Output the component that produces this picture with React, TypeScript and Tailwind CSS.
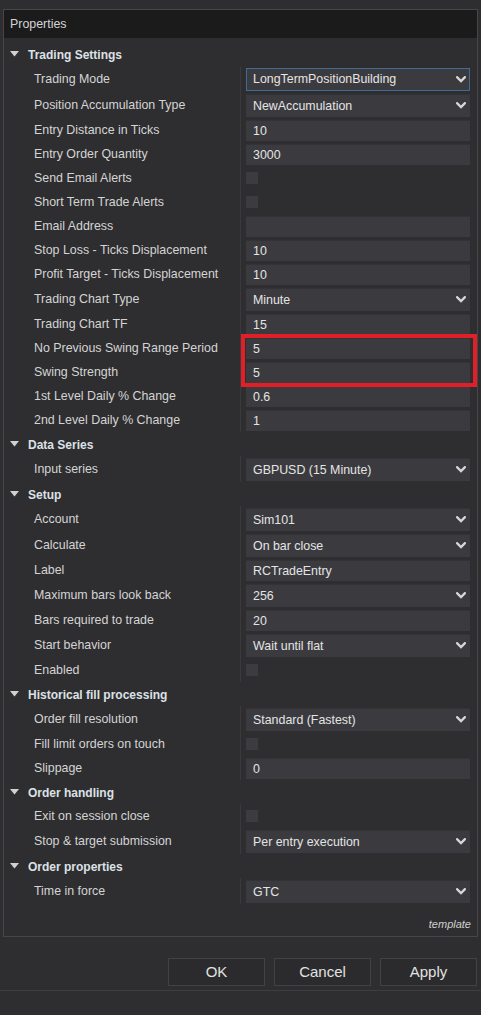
import React from "react";

type Row =
  | { kind: "section"; title: string }
  | { kind: "text"; label: string; value: string }
  | { kind: "combo"; label: string; value: string; focused?: boolean }
  | { kind: "check"; label: string };

const rows: Row[] = [
  { kind: "section", title: "Trading Settings" },
  { kind: "combo", label: "Trading Mode", value: "LongTermPositionBuilding", focused: true },
  { kind: "combo", label: "Position Accumulation Type", value: "NewAccumulation" },
  { kind: "text", label: "Entry Distance in Ticks", value: "10" },
  { kind: "text", label: "Entry Order Quantity", value: "3000" },
  { kind: "check", label: "Send Email Alerts" },
  { kind: "check", label: "Short Term Trade Alerts" },
  { kind: "text", label: "Email Address", value: "" },
  { kind: "text", label: "Stop Loss - Ticks Displacement", value: "10" },
  { kind: "text", label: "Profit Target - Ticks Displacement", value: "10" },
  { kind: "combo", label: "Trading Chart Type", value: "Minute" },
  { kind: "text", label: "Trading Chart TF", value: "15" },
  { kind: "text", label: "No Previous Swing Range Period", value: "5" },
  { kind: "text", label: "Swing Strength", value: "5" },
  { kind: "text", label: "1st Level Daily % Change", value: "0.6" },
  { kind: "text", label: "2nd Level Daily % Change", value: "1" },
  { kind: "section", title: "Data Series" },
  { kind: "combo", label: "Input series", value: "GBPUSD (15 Minute)" },
  { kind: "section", title: "Setup" },
  { kind: "combo", label: "Account", value: "Sim101" },
  { kind: "combo", label: "Calculate", value: "On bar close" },
  { kind: "text", label: "Label", value: "RCTradeEntry" },
  { kind: "combo", label: "Maximum bars look back", value: "256" },
  { kind: "text", label: "Bars required to trade", value: "20" },
  { kind: "combo", label: "Start behavior", value: "Wait until flat" },
  { kind: "check", label: "Enabled" },
  { kind: "section", title: "Historical fill processing" },
  { kind: "combo", label: "Order fill resolution", value: "Standard (Fastest)" },
  { kind: "check", label: "Fill limit orders on touch" },
  { kind: "text", label: "Slippage", value: "0" },
  { kind: "section", title: "Order handling" },
  { kind: "check", label: "Exit on session close" },
  { kind: "combo", label: "Stop & target submission", value: "Per entry execution" },
  { kind: "section", title: "Order properties" },
  { kind: "combo", label: "Time in force", value: "GTC" },
];

function Chevron() {
  return (
    <svg width="10" height="7" viewBox="0 0 10 7" className="shrink-0">
      <polyline points="1.2,1.2 5,5 8.8,1.2" fill="none" stroke="#d6d6d6" strokeWidth="2.3" strokeLinecap="square" />
    </svg>
  );
}

function Label({ text }: { text: string }) {
  return (
    <div className="w-[236px] shrink-0 pl-[30px] pt-[1px] text-[12.4px] text-[#d4d4d4] whitespace-nowrap">{text}</div>
  );
}

function PropRow({ row }: { row: Row }) {
  if (row.kind === "section") {
    return (
      <div className="h-[24px] flex items-center pl-[6px]">
        <svg width="9" height="6" viewBox="0 0 9 6" className="mr-[9px]">
          <polygon points="0,0 9,0 4.5,5.5" fill="#d0d0d0" />
        </svg>
        <span className="pt-[1px] text-[12px] font-bold text-[#dde1e6]">{row.title}</span>
      </div>
    );
  }
  if (row.kind === "check") {
    return (
      <div className="h-[24px] flex items-center">
        <Label text={row.label} />
        <div className="h-full flex-1 border-l border-[#3a3a3d] pl-[5px] flex items-center">
          <div className="w-[12px] h-[12px] bg-[#3c3c40]" />
        </div>
      </div>
    );
  }
  if (row.kind === "text") {
    return (
      <div className="h-[24px] flex items-center">
        <Label text={row.label} />
        <div className="h-full flex-1 border-l border-[#3a3a3d] pl-[5px] pr-[7px] flex items-center">
          <div className="h-[21px] w-full bg-[#3b3b3f] border-t border-[#333336] pl-[7px] pt-[1px] flex items-center text-[12.4px] text-[#e4e4e4]">
            {row.value}
          </div>
        </div>
      </div>
    );
  }
  return (
    <div className="h-[26px] flex items-center">
      <Label text={row.label} />
      <div className="h-full flex-1 border-l border-[#3a3a3d] pl-[5px] pr-[7px] flex items-center">
        <div
          className={
            row.focused
              ? "h-[23px] w-full bg-[#3b3b3f] border border-[#3f6c96] pl-[6px] pr-[3px] flex items-center justify-between text-[12.4px] text-[#e4e4e4]"
              : "h-[23px] w-full bg-[#3b3b3f] border-t border-[#333336] pl-[7px] pr-[4px] flex items-center justify-between text-[12.4px] text-[#e4e4e4]"
          }
        >
          <span className="pt-[1px]">{row.value}</span>
          <Chevron />
        </div>
      </div>
    </div>
  );
}

export default function App() {
  return (
    <div className="relative w-[481px] h-[1015px] bg-[#2e2e30] pt-[9px] font-['Liberation_Sans',Arial,sans-serif] overflow-hidden">
      <div className="ml-[3px] w-[475px] h-[928px] border border-[#46464a] flex flex-col">
        <div className="h-[28px] bg-[#1b1b1c] pl-[6px] pt-[1px] flex items-center text-[12.4px] text-[#d4d4d4]">Properties</div>
        <div className="pt-[4px] flex flex-col">
          {rows.map((r, i) => (
            <PropRow key={i} row={r} />
          ))}
        </div>
        <div className="mt-[12px] pr-[6px] flex justify-end text-[11px] italic text-[#cfcfcf]">template</div>
      </div>

      <div className="mt-[21px] pr-[4px] flex justify-end gap-[9px]">
        {["OK", "Cancel", "Apply"].map((b) => (
          <div
            key={b}
            className="w-[97px] h-[28px] border border-[#424245] bg-[#2b2b2d] flex items-center justify-center text-[15px] text-[#e2e2e2]"
          >
            {b}
          </div>
        ))}
      </div>
      <div className="mt-[4px] border-t border-[#3e3e41]" />

      <div className="absolute left-[241px] top-[334px] w-[236px] h-[53px] border-[4px] border-[#e11f28]" />
    </div>
  );
}
